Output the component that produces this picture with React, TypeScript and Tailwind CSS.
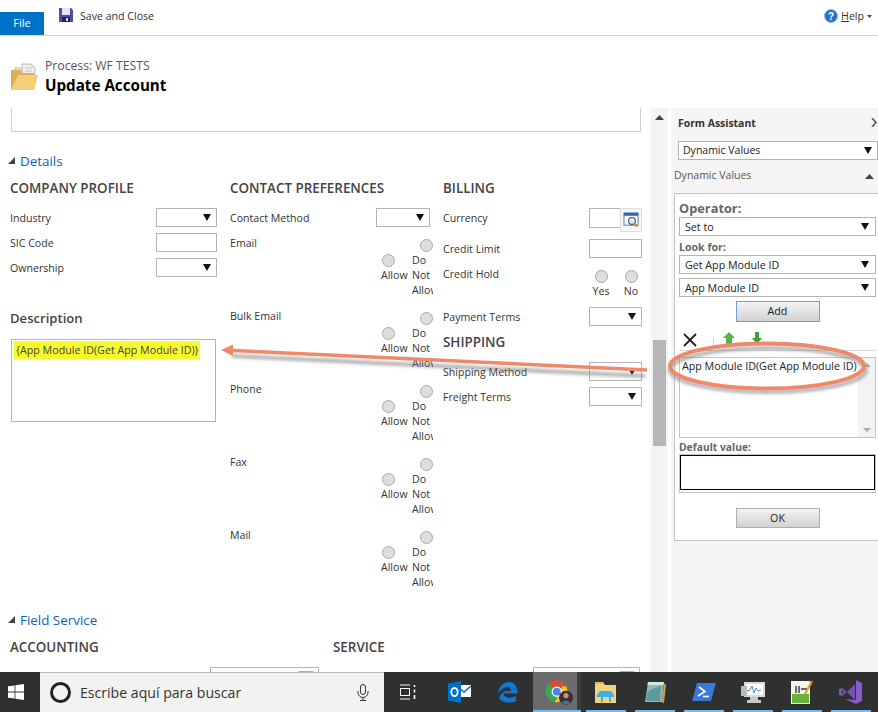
import React from 'react';

const Caret = ({ className = '' }: { className?: string }) => (
  <svg width="8" height="7" viewBox="0 0 8 7" className={className}>
    <path d="M0 0h8L4 7z" fill="#111" />
  </svg>
);

const Select = ({ value = '', className = '' }: { value?: string; className?: string }) => (
  <div className={`flex items-center justify-between border border-[#b4b4b4] bg-white pl-[4px] pr-[5px] text-[#222] ${className}`}>
    <span className="truncate pt-[1px]">{value}</span>
    <Caret className="shrink-0" />
  </div>
);

const LookupIcon = () => (
  <svg width="17" height="16" viewBox="0 0 18 17" className="shrink-0">
    <rect x="1" y="1" width="15" height="13" fill="#fff" stroke="#4a78b8" />
    <rect x="1" y="1" width="15" height="3" fill="#2f62b0" />
    <circle cx="9.500" cy="9.500" r="3.600" fill="#dbe9f4" stroke="#555" strokeWidth="1.200" />
    <path d="M12 12l3.500 3.500" stroke="#c98a2e" strokeWidth="2" />
  </svg>
);

const Field = ({ label, children, h = 'h-[25px]' }: { label: string; children: React.ReactNode; h?: string }) => (
  <div className={`flex items-start justify-between ${h}`}>
    <span className="leading-[20px]">{label}</span>
    {children}
  </div>
);

const Radio = () => <span className="mb-[1px] block h-[13px] w-[13px] rounded-full border border-[#a8a8a8] bg-[#dedede]" />;

const ContactRow = ({ label }: { label: string }) => (
  <div className="flex h-[73px] items-start justify-between">
    <span className="leading-[16px]">{label}</span>
    <div className="flex items-center pt-[4px]">
      <div className="flex w-[31px] flex-col">
        <span className="ml-[1px] block"><Radio /></span>
        <span className="block leading-[15px]">Allow</span>
      </div>
      <div className="flex w-[21px] flex-col overflow-hidden">
        <span className="ml-[8px] block"><Radio /></span>
        <span className="block leading-[15px]">Do</span>
        <span className="block leading-[15px]">Not</span>
        <span className="block leading-[15px]">Allow</span>
      </div>
    </div>
  </div>
);

const Heading = ({ children }: { children: React.ReactNode }) => (
  <div className="mb-[10px] h-[20px] text-[13.4px] font-semibold leading-[20px] text-[#444]">{children}</div>
);

const SectionToggle = ({ children }: { children: React.ReactNode }) => (
  <div className="flex h-[20px] items-center pl-[8px] text-[13.4px] text-[#1160b7]">
    <svg width="8" height="8" viewBox="0 0 8 8" className="mr-[4px] -mt-[3px]">
      <path d="M0 8h7V1z" fill="#444" />
    </svg>
    {children}
  </div>
);

const ArrowOverlay = () => (
  <svg width="878" height="672" viewBox="0 0 878 672" className="pointer-events-none absolute left-0 top-0">
    <defs>
      <filter id="soft" x="-10%" y="-50%" width="120%" height="200%">
        <feGaussianBlur stdDeviation="1.600" />
      </filter>
    </defs>
    <g filter="url(#soft)" opacity="0.55" fill="none" stroke="#777">
      <path d="M232 356L645 376" strokeWidth="4" />
      <ellipse cx="768" cy="370" rx="98" ry="22" strokeWidth="4" />
    </g>
    <path d="M228 350.200L647 370" stroke="#ee8a6a" strokeWidth="3.500" fill="none" />
    <path d="M221 350L233 344.500V356z" fill="#ee8a6a" />
    <ellipse cx="767" cy="366" rx="97" ry="22.500" fill="none" stroke="#ee8a6a" strokeWidth="4" />
  </svg>
);

const FormAssistant = () => (
  <aside className="flex h-full w-[207px] shrink-0 flex-col bg-[#f5f5f5] pl-[3px] text-[10.7px] text-[#222]">
    <div className="flex h-[30px] items-center pl-[4px] pt-[1px] text-[10.4px] font-bold text-[#333]">
      <span className="flex-1">Form Assistant</span>
      <svg width="6" height="9" viewBox="0 0 6 9" className="mr-[1px] -mt-[3px]">
        <path d="M1 0l4 4.500L1 9" fill="none" stroke="#555" strokeWidth="1.600" />
      </svg>
    </div>
    <Select value="Dynamic Values" className="ml-[4px] mt-[3px] h-[19px] pr-[4px] text-[10.5px]" />
    <div className="flex h-[33px] items-center pb-[1px] pr-[4px] text-[10.5px] text-[#555]">
      <span className="flex-1">Dynamic Values</span>
      <svg width="9" height="5" viewBox="0 0 9 5"><path d="M0 5h9L4.500 0z" fill="#444" /></svg>
    </div>
    <div className="h-[348px] border border-r-0 border-[#c4c4c4] bg-white pl-[4px] pr-[2px]">
      <div className="h-[23px] pt-[4px] text-[12.8px] font-bold leading-[20px] text-[#666]">Operator:</div>
      <Select value="Set to" className="h-[19px] pl-[5px] pr-[6px]" />
      <div className="mt-[2px] h-[17px] text-[10.6px] font-bold leading-[19px] text-[#666]">Look for:</div>
      <Select value="Get App Module ID" className="h-[19px] pl-[5px] pr-[6px]" />
      <Select value="App Module ID" className="mt-[4px] h-[19px] pl-[5px] pr-[6px]" />
      <button className="mx-auto mt-[4px] block h-[21px] w-[84px] border border-[#6f9fd8] bg-gradient-to-b from-[#f4f4f4] to-[#d2d2d2] text-[#222]">Add</button>
      <div className="mt-[8px] flex h-[21px] items-center border-b border-[#d8d8d8] pl-[4px]">
        <svg width="14" height="14" viewBox="0 0 14 14"><path d="M1 1l12 12M13 1L1 13" stroke="#222" strokeWidth="1.800" /></svg>
        <span className="ml-[16px] mt-[6px] h-[10px] w-px bg-[#cfcfcf]" />
        <svg width="12" height="12" viewBox="0 0 12 12" className="ml-[9px] -mt-[4px]"><path d="M6 0l6 6H9v6H3V6H0z" fill="#4fb848" /></svg>
        <svg width="10" height="12" viewBox="0 0 10 12" className="ml-[17px] -mt-[4px]"><path d="M3 0h4v6h3l-5 6-5-6h3z" fill="#3f9e3a" /></svg>
      </div>
      <div className="mt-[6px] flex h-[81px] border border-[#c4c4c4] pl-[2px]">
        <span className="w-0 flex-1 whitespace-nowrap leading-[16px]">App Module ID(Get App Module ID)</span>
        <div className="flex w-[17px] shrink-0 flex-col items-center justify-between bg-[#f3f3f3] py-[5px]">
          <svg width="8" height="4" viewBox="0 0 8 4"><path d="M0 4h8L4 0z" fill="#aaa" /></svg>
          <svg width="8" height="4" viewBox="0 0 8 4"><path d="M0 0h8L4 4z" fill="#aaa" /></svg>
        </div>
      </div>
      <div className="mt-[1px] h-[15px] text-[10.3px] font-bold leading-[17px] text-[#666]">Default value:</div>
      <div className="border border-[#c4c4c4] pb-[2px]">
        <div className="h-[35px] border border-black bg-white" />
      </div>
      <button className="mx-auto mt-[15px] block h-[20px] w-[84px] border border-[#a8b0bc] bg-gradient-to-b from-[#f4f4f4] to-[#d2d2d2] text-[#222]">OK</button>
    </div>
  </aside>
);

const TaskIcon = ({ children, className = '', active = false }: { children: React.ReactNode; className?: string; active?: boolean }) => (
  <div className={`relative flex items-center justify-center ${className}`}>
    {children}
    {active && <span className="absolute bottom-0 left-[5px] right-[4px] h-[2px] bg-[#76b9ed]" />}
  </div>
);

const Taskbar = () => (
  <footer className="flex h-[40px] shrink-0 items-stretch bg-[#2f3130]">
    <div className="flex w-[40px] items-center justify-center">
      <svg width="16" height="16" viewBox="0 0 16 16" className="-ml-[8px]">
        <path d="M0 2.300l6.600-.9v6.200H0zM7.400 1.300L16 0v7.600H7.400zM0 8.400h6.600v6.200L0 13.700zM7.400 8.400H16V16l-8.600-1.300z" fill="#fff" />
      </svg>
    </div>
    <div className="flex w-[344px] items-center border-t border-[#bdbdbd] bg-[#f2f2f2] pl-[10px] text-[14.1px] text-[#333]">
      <span className="h-[21px] w-[21px] rounded-full border-[3px] border-[#222]" />
      <span className="ml-[9px] flex-1">Escribe aquí para buscar</span>
      <svg width="12" height="17" viewBox="0 0 12 17" className="mr-[15px]" fill="none" stroke="#333" strokeWidth="1">
        <rect x="3.500" y="0.500" width="5" height="10" rx="2.500" />
        <path d="M1 7v1.500a5 5 0 0 0 10 0V7M6 13.500V16M3 16.500h6" />
      </svg>
    </div>
    <div className="flex w-[53px] items-center pl-[16px]">
      <svg width="16" height="16" viewBox="0 0 16 16" fill="none" stroke="#fff" strokeWidth="1">
        <path d="M0 1h10M0 15h10" />
        <rect x="0.500" y="4.500" width="9" height="7" />
        <path d="M14.500 1v2M14.500 5.500v3M14.500 11v4" strokeWidth="1.600" />
      </svg>
    </div>
    <TaskIcon className="w-[44px]">
      <svg width="23" height="22" viewBox="0 0 23 22">
        <path d="M9 4h14v12H9z" fill="#fff" />
        <path d="M9 5l7 6 7-6" fill="none" stroke="#0072c6" strokeWidth="1.500" />
        <path d="M0 2.500L13 0v22L0 19.500z" fill="#0072c6" />
        <ellipse cx="6.500" cy="11" rx="3.200" ry="4" fill="none" stroke="#fff" strokeWidth="1.800" />
      </svg>
    </TaskIcon>
    <TaskIcon className="w-[52px]">
      <svg width="21" height="21" viewBox="0 0 21 21">
        <path d="M1 11C2 4 7 0 12 0c5 0 8.500 4 8.500 11.500H6.500c.5 4 6 6 12.500 2.500v5c-5 2.500-14 2.500-17-3 1-3 4-6 6-7h6c0-2-1.500-4-4-4C8 4.500 5 7 1 11z" fill="#0f78d4" />
      </svg>
    </TaskIcon>
    <div className="relative flex w-[48px] items-center border-r-[4px] border-[#3c3c3c] bg-[#6b6b6b] pl-[12px]">
      <svg width="28" height="25" viewBox="0 0 32 28">
        <path d="M12 11L3.500 4A13 13 0 0 1 24.500 7H13z" fill="#dd4b39" />
        <path d="M3.500 4A13 13 0 0 0 11 25l5-9-4-5z" fill="#3aa757" />
        <path d="M24.500 7A13 13 0 0 1 11 25l5.500-9 3-9z" fill="#f5c518" />
        <circle cx="13.500" cy="13" r="6" fill="#fff" />
        <circle cx="13.500" cy="13" r="4.500" fill="#4a86e8" />
        <circle cx="24" cy="20" r="8" fill="#3c2e2a" />
        <circle cx="24" cy="17.500" r="3" fill="#c79478" />
        <path d="M19 26c1-4 9-4 10 0-3 2-7 2-10 0z" fill="#3f6ea8" />
      </svg>
      <span className="absolute bottom-0 left-0 right-[-4px] h-[2px] bg-[#76b9ed]" />
    </div>
    <TaskIcon className="w-[49px]" active>
      <svg width="23" height="21" viewBox="0 0 23 21">
        <path d="M1 0h8l2 3h11v18H1z" fill="#f0d281" />
        <path d="M1 0h8v2H1z" fill="#e8b84b" />
        <path d="M6 9h11l3 4v2h-3v5H7v-5H3v-2z" fill="#3fb0e4" />
        <path d="M9 15h6v5H9z" fill="#f0d281" />
      </svg>
    </TaskIcon>
    <TaskIcon className="w-[49px]" active>
      <svg width="22" height="22" viewBox="0 0 22 22">
        <path d="M4 1h16l-2 20H1z" fill="#8fb8bd" />
        <path d="M4 1h16l-.5 3H3.500z" fill="#d8e4e4" />
        <path d="M3 12c5-6 10-5 14-7l-1 15H2z" fill="#5d9aa0" />
        <path d="M20 3l2 .5-2 18-2 .5z" fill="#d9a441" />
      </svg>
    </TaskIcon>
    <TaskIcon className="w-[49px]" active>
      <svg width="24" height="18" viewBox="0 0 24 18">
        <path d="M5 0h19l-5 18H0z" fill="#3c78d8" />
        <path d="M7 4l6 4.500L6 13" fill="none" stroke="#fff" strokeWidth="1.600" />
        <path d="M11 13.500h6" stroke="#fff" strokeWidth="1.600" />
      </svg>
    </TaskIcon>
    <TaskIcon className="w-[49px]" active>
      <svg width="24" height="21" viewBox="0 0 24 21">
        <rect x="3" y="0" width="21" height="15" fill="#d9d9d9" />
        <rect x="5" y="2" width="17" height="11" fill="#fff" />
        <path d="M6 9l3-1 2-4 2 7 2-5 2 3 3-1" fill="none" stroke="#4a90c8" strokeWidth="1" />
        <rect x="0" y="4" width="6" height="10" fill="#bbb" />
        <path d="M9 15h8v3h3v3H6v-3h3z" fill="#c8c8c8" />
      </svg>
    </TaskIcon>
    <TaskIcon className="w-[49px]" active>
      <svg width="22" height="24" viewBox="0 0 22 24">
        <rect x="0" y="1" width="19" height="23" fill="#f4f4ec" />
        <rect x="1" y="14" width="17" height="9" fill="#66b53a" />
        <path d="M5 6v7M8 6v7M10 9h6" stroke="#333" strokeWidth="1.400" />
        <path d="M14 14L21 1" stroke="#e5a12d" strokeWidth="2.200" />
        <path d="M20 0l2 1-1 2z" fill="#c0392b" />
      </svg>
    </TaskIcon>
    <TaskIcon className="w-[49px]" active>
      <svg width="23" height="24" viewBox="0 0 23 24">
        <path d="M17 0l6 3v18l-6 3L6 19l11 1V4z" fill="#8a5cc7" />
        <path d="M0 9l3-1 5 4 8-8v16l-8-8-5 4-3-1zM3 10v4l2-2z" fill="#7a4fb8" />
      </svg>
    </TaskIcon>
  </footer>
);

export default function App() {
  return (
    <div className="relative flex h-[712px] w-[878px] flex-col overflow-hidden bg-white font-['Open_Sans',sans-serif] text-[10.6px] text-[#333]">
      <header className="flex h-[36px] shrink-0 items-stretch border-b border-[#d6d6d6]">
        <div className="mt-[12px] flex w-[44px] items-center justify-center bg-[#0072c6] text-[11px] text-white">File</div>
        <div className="flex flex-1 items-start pl-[15px] pt-[8px]">
          <svg width="14" height="14" viewBox="0 0 14 14">
            <path d="M0 0h12l2 2v12H0z" fill="#4d4f9f" />
            <rect x="3" y="0" width="8" height="7" fill="#e4e6f6" />
            <rect x="3" y="9" width="8" height="5" fill="#20205c" />
            <rect x="7" y="10" width="2" height="3" fill="#ddd" />
          </svg>
          <span className="ml-[7px] leading-[16px] text-[#333]">Save and Close</span>
        </div>
        <div className="flex items-start pr-[6px] pt-[9px]">
          <svg width="14" height="14" viewBox="0 0 14 14">
            <circle cx="7" cy="7" r="6.500" fill="#2b6fc4" stroke="#8fb4e4" />
            <text x="7" y="11" textAnchor="middle" fontSize="10" fontWeight="700" fill="#fff" fontFamily="Liberation Sans, sans-serif">?</text>
          </svg>
          <span className="ml-[3px] leading-[14px] text-[#333]"><span className="underline">H</span>elp</span>
          <svg width="5" height="3" viewBox="0 0 5 3" className="ml-[3px] mt-[6px]"><path d="M0 0h5L2.500 3z" fill="#444" /></svg>
        </div>
      </header>

      <div className="flex h-[72px] shrink-0 items-start pl-[8px] pt-[22px]">
        <svg width="30" height="30" viewBox="0 0 30 30" className="mt-[5px]">
          <path d="M6 4h9l2 2v6H6z" fill="#e9d9a6" />
          <path d="M14 1h9l4 4v14H14z" fill="#efefef" stroke="#b8b8b8" />
          <path d="M17 5h7M17 8h7M17 11h7" stroke="#c4c4c4" />
          <path d="M3 7h9l2 3h12v17H3z" fill="#d9b25c" />
          <path d="M10 12h20l-4 15H3z" fill="#f4cf78" />
        </svg>
        <div className="ml-[7px] flex flex-col">
          <span className="text-[12.2px] leading-[16px] text-[#555]">Process: WF TESTS</span>
          <span className="mt-[1px] text-[15.2px] font-bold leading-[20px] text-black">Update Account</span>
        </div>
      </div>

      <main className="flex min-h-0 flex-1">
        <section className="w-[651px] shrink-0 overflow-hidden">
          <div className="ml-[11px] h-[24px] w-[630px] border border-t-0 border-[#d0d0d0]" />
          <div className="mt-[19px]"><SectionToggle>Details</SectionToggle></div>
          <div className="mt-[7px] flex h-[422px] pl-[10px]">
            <div className="w-[220px] shrink-0 pr-[13px]">
              <Heading>COMPANY PROFILE</Heading>
              <Field label="Industry"><Select className="h-[19px] w-[61px]" /></Field>
              <Field label="SIC Code"><div className="h-[19px] w-[61px] border border-[#b4b4b4]" /></Field>
              <Field label="Ownership"><Select className="h-[19px] w-[61px]" /></Field>
              <div className="mt-[25px] h-[20px] text-[13.1px] font-semibold leading-[20px] text-[#444]">Description</div>
              <div className="ml-[1px] mt-[11px] h-[83px] w-[205px] border border-[#b4b4b4] pl-[2px] pt-[1px]">
                <span className="block w-[186px] whitespace-nowrap bg-[#f8fb2a] pl-[2px] text-[10.7px] leading-[18px] text-[#444]">{'{App Module ID(Get App Module ID)}'}</span>
              </div>
            </div>
            <div className="w-[213px] shrink-0 pr-[10px]">
              <Heading>CONTACT PREFERENCES</Heading>
              <div className="pr-[3px]">
                <Field label="Contact Method" h="h-[27px]"><Select className="h-[19px] w-[54px]" /></Field>
              </div>
              <ContactRow label="Email" />
              <ContactRow label="Bulk Email" />
              <ContactRow label="Phone" />
              <ContactRow label="Fax" />
              <ContactRow label="Mail" />
            </div>
            <div className="w-[199px] shrink-0">
              <Heading>BILLING</Heading>
              <Field label="Currency" h="h-[31px]">
                <div className="flex items-start">
                  <div className="h-[20px] w-[31px] border border-r-0 border-[#b4b4b4]" />
                  <div className="flex h-[24px] w-[22px] items-center justify-center border border-[#dcdcdc] bg-[#f7f7f7]"><LookupIcon /></div>
                </div>
              </Field>
              <Field label="Credit Limit"><div className="h-[19px] w-[53px] border border-[#b4b4b4]" /></Field>
              <div className="flex h-[43px] items-start justify-between">
                <span className="leading-[20px]">Credit Hold</span>
                <div className="mr-[1px] flex gap-[10px] pt-[6px]">
                  <div className="flex w-[20px] flex-col items-center"><Radio /><span className="leading-[15px]">Yes</span></div>
                  <div className="flex w-[20px] flex-col items-center"><Radio /><span className="leading-[15px]">No</span></div>
                </div>
              </div>
              <Field label="Payment Terms"><Select className="h-[19px] w-[53px]" /></Field>
              <Heading>SHIPPING</Heading>
              <Field label="Shipping Method"><Select className="h-[19px] w-[53px]" /></Field>
              <Field label="Freight Terms"><Select className="h-[19px] w-[53px]" /></Field>
            </div>
          </div>
          <div className="mt-[10px]"><SectionToggle>Field Service</SectionToggle></div>
          <div className="mt-[7px] flex pl-[10px]">
            <div className="w-[323px] shrink-0">
              <Heading>ACCOUNTING</Heading>
              <div className="ml-[200px] flex h-[19px] w-[109px] justify-end border border-[#b4b4b4] pr-[3px] pt-[3px]"><LookupIcon /></div>
            </div>
            <div className="w-[307px] shrink-0">
              <Heading>SERVICE</Heading>
              <div className="ml-[200px] flex h-[19px] w-[107px] justify-end border border-[#b4b4b4] pr-[3px] pt-[3px]"><LookupIcon /></div>
            </div>
          </div>
        </section>

        <div className="flex w-[17px] shrink-0 flex-col items-center bg-[#f3f3f3] pt-[7px]">
          <svg width="9" height="5" viewBox="0 0 9 5"><path d="M0 5h9L4.500 0z" fill="#444" /></svg>
          <div className="mt-[220px] h-[106px] w-[13px] bg-[#b6b6b6]" />
        </div>
        <div className="w-[3px] shrink-0" />
        <FormAssistant />
      </main>

      <Taskbar />
      <ArrowOverlay />
    </div>
  );
}
